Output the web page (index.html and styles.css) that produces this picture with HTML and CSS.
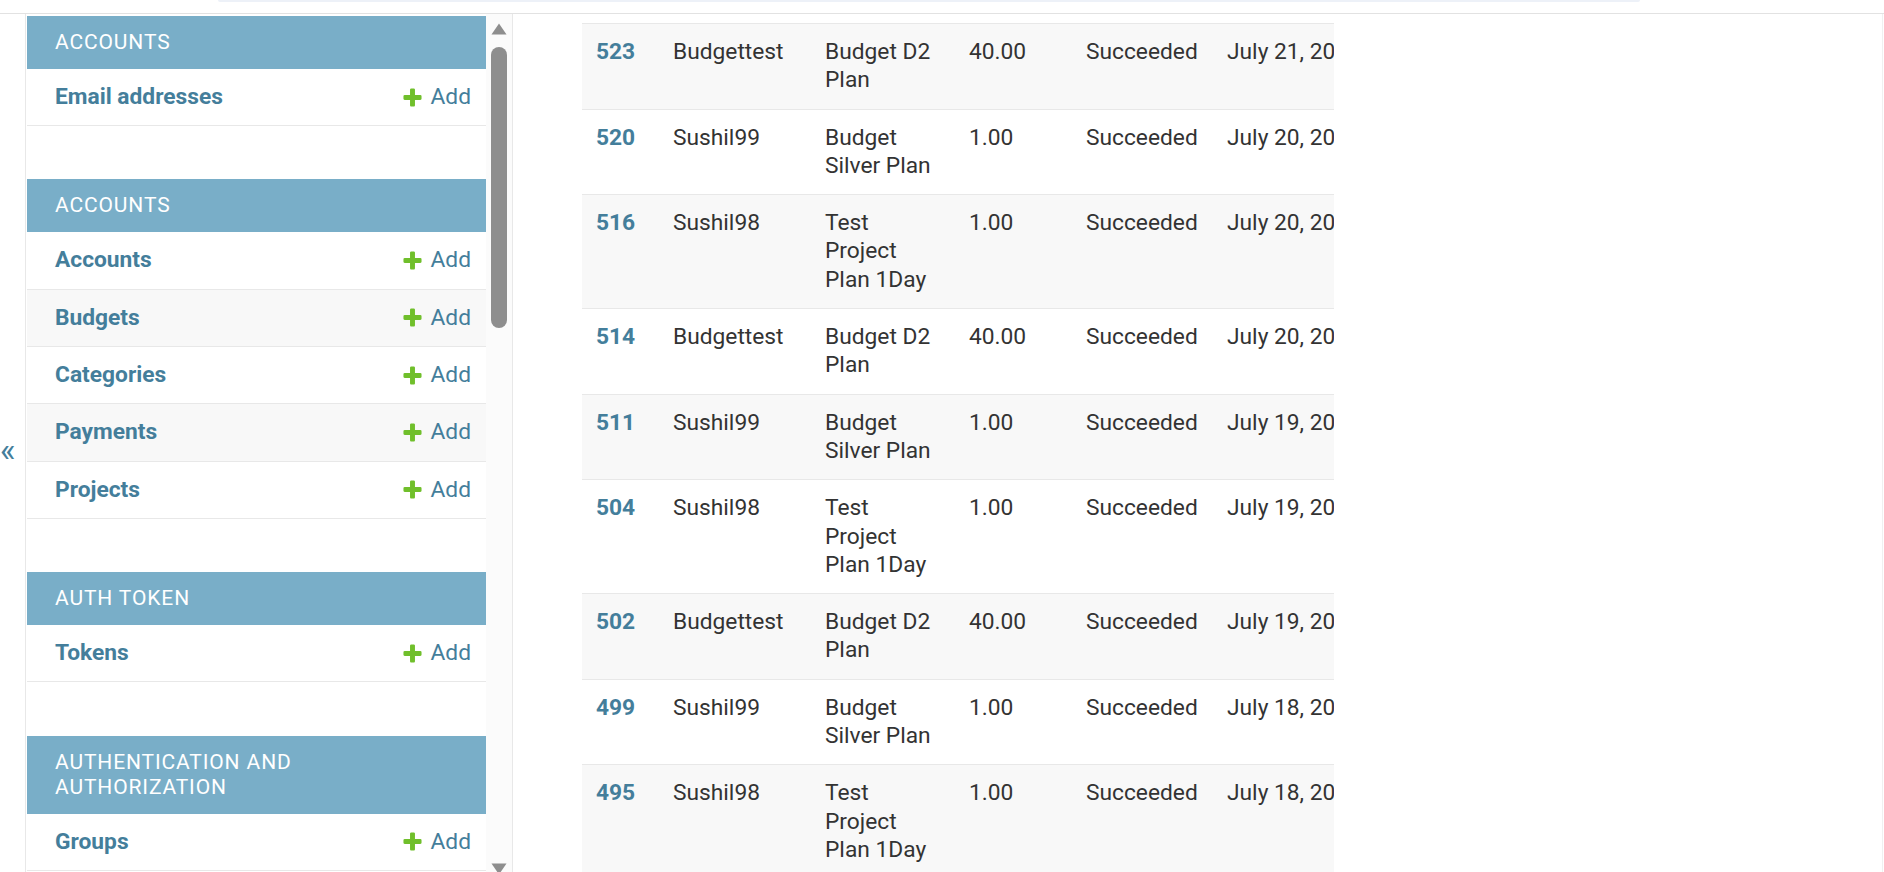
FILE: index.html
```html
<!DOCTYPE html>
<html lang="en">
<head>
<meta charset="utf-8">
<title>Payments | Django site admin</title>
<link rel="stylesheet" href="styles.css">
</head>
<body>
<div class="topbar"><div class="top-strip"></div></div>
<div class="page">
  <button class="toggle" type="button" aria-label="Toggle navigation"><span class="toggle-glyph">«</span></button>
  <nav class="sidebar">
    <div class="sidebar-content">
      <div class="module">
        <div class="caption">Accounts</div>
        <div class="models">
          <div class="row"><a class="model" href="#">Email addresses</a><a class="addlink" href="#"><svg class="plus" viewBox="0 0 1792 1792"><path d="M1600 796v192q0 40-28 68t-68 28h-416v416q0 40-28 68t-68 28h-192q-40 0-68-28t-28-68v-416h-416q-40 0-68-28t-28-68v-192q0-40 28-68t68-28h416v-416q0-40 28-68t68-28h192q40 0 68 28t28 68v416h416q40 0 68 28t28 68z"/></svg>Add</a></div>
        </div>
      </div>
      <div class="module">
        <div class="caption">Accounts</div>
        <div class="models">
          <div class="row"><a class="model" href="#">Accounts</a><a class="addlink" href="#"><svg class="plus" viewBox="0 0 1792 1792"><path d="M1600 796v192q0 40-28 68t-68 28h-416v416q0 40-28 68t-68 28h-192q-40 0-68-28t-28-68v-416h-416q-40 0-68-28t-28-68v-192q0-40 28-68t68-28h416v-416q0-40 28-68t68-28h192q40 0 68 28t28 68v416h416q40 0 68 28t28 68z"/></svg>Add</a></div>
          <div class="row"><a class="model" href="#">Budgets</a><a class="addlink" href="#"><svg class="plus" viewBox="0 0 1792 1792"><path d="M1600 796v192q0 40-28 68t-68 28h-416v416q0 40-28 68t-68 28h-192q-40 0-68-28t-28-68v-416h-416q-40 0-68-28t-28-68v-192q0-40 28-68t68-28h416v-416q0-40 28-68t68-28h192q40 0 68 28t28 68v416h416q40 0 68 28t28 68z"/></svg>Add</a></div>
          <div class="row"><a class="model" href="#">Categories</a><a class="addlink" href="#"><svg class="plus" viewBox="0 0 1792 1792"><path d="M1600 796v192q0 40-28 68t-68 28h-416v416q0 40-28 68t-68 28h-192q-40 0-68-28t-28-68v-416h-416q-40 0-68-28t-28-68v-192q0-40 28-68t68-28h416v-416q0-40 28-68t68-28h192q40 0 68 28t28 68v416h416q40 0 68 28t28 68z"/></svg>Add</a></div>
          <div class="row"><a class="model" href="#">Payments</a><a class="addlink" href="#"><svg class="plus" viewBox="0 0 1792 1792"><path d="M1600 796v192q0 40-28 68t-68 28h-416v416q0 40-28 68t-68 28h-192q-40 0-68-28t-28-68v-416h-416q-40 0-68-28t-28-68v-192q0-40 28-68t68-28h416v-416q0-40 28-68t68-28h192q40 0 68 28t28 68v416h416q40 0 68 28t28 68z"/></svg>Add</a></div>
          <div class="row"><a class="model" href="#">Projects</a><a class="addlink" href="#"><svg class="plus" viewBox="0 0 1792 1792"><path d="M1600 796v192q0 40-28 68t-68 28h-416v416q0 40-28 68t-68 28h-192q-40 0-68-28t-28-68v-416h-416q-40 0-68-28t-28-68v-192q0-40 28-68t68-28h416v-416q0-40 28-68t68-28h192q40 0 68 28t28 68v416h416q40 0 68 28t28 68z"/></svg>Add</a></div>
        </div>
      </div>
      <div class="module">
        <div class="caption">Auth Token</div>
        <div class="models">
          <div class="row"><a class="model" href="#">Tokens</a><a class="addlink" href="#"><svg class="plus" viewBox="0 0 1792 1792"><path d="M1600 796v192q0 40-28 68t-68 28h-416v416q0 40-28 68t-68 28h-192q-40 0-68-28t-28-68v-416h-416q-40 0-68-28t-28-68v-192q0-40 28-68t68-28h416v-416q0-40 28-68t68-28h192q40 0 68 28t28 68v416h416q40 0 68 28t28 68z"/></svg>Add</a></div>
        </div>
      </div>
      <div class="module">
        <div class="caption">Authentication and Authorization</div>
        <div class="models">
          <div class="row"><a class="model" href="#">Groups</a><a class="addlink" href="#"><svg class="plus" viewBox="0 0 1792 1792"><path d="M1600 796v192q0 40-28 68t-68 28h-416v416q0 40-28 68t-68 28h-192q-40 0-68-28t-28-68v-416h-416q-40 0-68-28t-28-68v-192q0-40 28-68t68-28h416v-416q0-40 28-68t68-28h192q40 0 68 28t28 68v416h416q40 0 68 28t28 68z"/></svg>Add</a></div>
        </div>
      </div>
    </div>
    <div class="scrollbar">
      <svg class="arrow" viewBox="0 0 16 12"><path d="M8 0.5 L15.5 11.5 L0.5 11.5 Z"/></svg>
      <div class="thumb"></div>
      <svg class="arrow arrow-down" viewBox="0 0 16 12"><path d="M0.5 0.5 L15.5 0.5 L8 11.5 Z"/></svg>
    </div>
  </nav>
  <main class="content">
    <div class="results">
      <table>
        <colgroup>
          <col class="c-id"><col class="c-user"><col class="c-plan"><col class="c-amount"><col class="c-status"><col class="c-date">
        </colgroup>
        <tbody>
          <tr><td class="id"><a href="#">523</a></td><td>Budgettest</td><td>Budget D2 Plan</td><td>40.00</td><td>Succeeded</td><td class="date">July 21, 2023, 6:42 a.m.</td></tr>
          <tr><td class="id"><a href="#">520</a></td><td>Sushil99</td><td>Budget Silver Plan</td><td>1.00</td><td>Succeeded</td><td class="date">July 20, 2023, 5:31 p.m.</td></tr>
          <tr><td class="id"><a href="#">516</a></td><td>Sushil98</td><td>Test Project Plan 1Day</td><td>1.00</td><td>Succeeded</td><td class="date">July 20, 2023, 11:08 a.m.</td></tr>
          <tr><td class="id"><a href="#">514</a></td><td>Budgettest</td><td>Budget D2 Plan</td><td>40.00</td><td>Succeeded</td><td class="date">July 20, 2023, 6:40 a.m.</td></tr>
          <tr><td class="id"><a href="#">511</a></td><td>Sushil99</td><td>Budget Silver Plan</td><td>1.00</td><td>Succeeded</td><td class="date">July 19, 2023, 5:30 p.m.</td></tr>
          <tr><td class="id"><a href="#">504</a></td><td>Sushil98</td><td>Test Project Plan 1Day</td><td>1.00</td><td>Succeeded</td><td class="date">July 19, 2023, 11:05 a.m.</td></tr>
          <tr><td class="id"><a href="#">502</a></td><td>Budgettest</td><td>Budget D2 Plan</td><td>40.00</td><td>Succeeded</td><td class="date">July 19, 2023, 6:39 a.m.</td></tr>
          <tr><td class="id"><a href="#">499</a></td><td>Sushil99</td><td>Budget Silver Plan</td><td>1.00</td><td>Succeeded</td><td class="date">July 18, 2023, 5:29 p.m.</td></tr>
          <tr><td class="id"><a href="#">495</a></td><td>Sushil98</td><td>Test Project Plan 1Day</td><td>1.00</td><td>Succeeded</td><td class="date">July 18, 2023, 11:02 a.m.</td></tr>
        </tbody>
      </table>
    </div>
  </main>
</div>
</body>
</html>
```
FILE: styles.css
```css
html, body {
  margin: 0;
  padding: 0;
  height: 100%;
  overflow: hidden;
  background: #fff;
  font-family: Roboto, "Liberation Sans", sans-serif;
  color: #333;
}

.topbar {
  height: 13px;
  border-bottom: 1px solid #e2e2e2;
}

.top-strip {
  margin-left: 218px;
  width: 1422px;
  height: 2px;
  background: #edf1f8;
  border-radius: 0 0 4px 4px;
}

.page {
  display: flex;
  align-items: flex-start;
  height: 858px;
  overflow: hidden;
}

.toggle {
  box-sizing: border-box;
  flex: 0 0 26px;
  width: 26px;
  height: 858px;
  margin: 0;
  padding: 12px 0 0 0;
  border: 0;
  border-right: 1px solid #e8e8e8;
  background: #fff;
  display: flex;
  align-items: center;
  justify-content: flex-start;
  overflow: hidden;
  color: #447e9b;
  font-family: Roboto, "Liberation Sans", sans-serif;
  font-size: 33px;
  line-height: 1;
}

.toggle-glyph {
  margin-left: 0;
}

.sidebar {
  flex: 0 0 486px;
  width: 486px;
  height: 870px;
  display: flex;
  border-right: 1px solid #e8e8e8;
  overflow: hidden;
}

.sidebar-content {
  width: 459px;
  padding: 2px 0 0 1px;
  flex: 0 0 auto;
}

.module {
  margin-bottom: 53.2px;
}

.caption {
  background: #79aec8;
  color: #fff;
  font-size: 21px;
  line-height: 25px;
  letter-spacing: 0.875px;
  text-transform: uppercase;
  padding: 14px 30px 14px 28px;
}

.row {
  display: flex;
  justify-content: space-between;
  align-items: center;
  padding: 14px 15px 14px 28px;
  border-bottom: 1px solid #e8e8e8;
  font-size: 22.75px;
  line-height: 28.3px;
  background: #fff;
}

.row:nth-child(even) {
  background: #f8f8f8;
}

.model {
  color: #447e9b;
  font-weight: 700;
  text-decoration: none;
}

.addlink {
  display: flex;
  align-items: center;
  gap: 6px;
  color: #447e9b;
  text-decoration: none;
  white-space: nowrap;
}

.plus {
  width: 23px;
  height: 23px;
  fill: #70bf2b;
}

.scrollbar {
  flex: 0 0 26px;
  width: 26px;
  height: 870px;
  box-sizing: border-box;
  padding: 9px 0;
  background: #fbfbfb;
  display: flex;
  flex-direction: column;
  align-items: center;
}

.arrow {
  width: 16px;
  height: 12px;
  fill: #8e8e8e;
  flex: 0 0 auto;
}

.arrow-down {
  margin-top: auto;
}

.thumb {
  width: 16px;
  height: 281px;
  margin-top: 12px;
  border-radius: 8px;
  background: #8e8e8e;
}

.content {
  flex: 1 1 auto;
  padding: 9px 0 0 69px;
  height: 858px;
  box-sizing: border-box;
  border-right: 1px solid #f0f0f0;
  margin-right: 1px;
}

.results {
  width: 752px;
  overflow: hidden;
}

table {
  border-collapse: collapse;
  table-layout: fixed;
  width: 1100px;
  border-top: 1px solid #e8e8e8;
}

.c-id { width: 77px; }
.c-user { width: 152px; }
.c-plan { width: 144px; }
.c-amount { width: 117px; }
.c-status { width: 141px; }
.c-date { width: 469px; }

td {
  padding: 14px;
  font-size: 22.75px;
  line-height: 28.3px;
  color: #333;
  border-bottom: 1px solid #e8e8e8;
  vertical-align: top;
  text-align: left;
}

tr:nth-child(odd) td {
  background: #f8f8f8;
}

.id a {
  color: #447e9b;
  font-weight: 700;
  text-decoration: none;
}

.date {
  white-space: nowrap;
}
```
